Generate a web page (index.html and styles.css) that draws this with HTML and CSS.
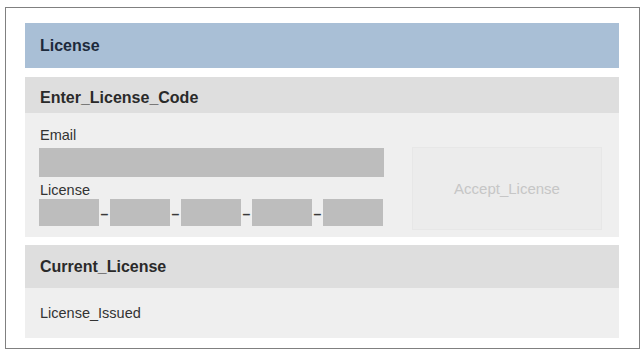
FILE: index.html
```html
<!DOCTYPE html>
<html lang="en">
<head>
  <meta charset="UTF-8">
  <meta name="viewport" content="width=device-width, initial-scale=1.0">
  <title>License</title>
  <link rel="stylesheet" href="styles.css">
</head>
<body>
  <div class="frame">
    <div class="title-bar">License</div>

    <div class="section">
      <div class="section-head">Enter_License_Code</div>
      <div class="section-body enter">
        <div class="fields">
          <div class="label">Email</div>
          <div class="input email"></div>
          <div class="label license">License</div>
          <div class="key-row">
            <span class="input seg"></span><span class="dash">&ndash;</span>
            <span class="input seg"></span><span class="dash">&ndash;</span>
            <span class="input seg"></span><span class="dash">&ndash;</span>
            <span class="input seg"></span><span class="dash">&ndash;</span>
            <span class="input seg"></span>
          </div>
        </div>
        <button class="accept">Accept_License</button>
      </div>
    </div>

    <div class="section current">
      <div class="section-head tall">Current_License</div>
      <div class="section-body issued">License_Issued</div>
    </div>
  </div>
</body>
</html>
```

FILE: styles.css
```css
* {
  margin: 0;
  padding: 0;
  box-sizing: border-box;
}

body {
  font-family: "Liberation Sans", Arial, sans-serif;
  background-color: #ffffff;
  color: #333333;
}

.frame {
  width: 635px;
  height: 342px;
  margin: 7px 0 0 5px;
  padding: 15px 20px 0 19px;
  border: 1px solid #808080;
  background-color: #ffffff;
}

.title-bar {
  height: 45px;
  display: flex;
  align-items: center;
  padding-left: 15px;
  background-color: #a9bfd6;
  color: #1d2a3c;
  font-size: 16px;
  font-weight: bold;
}

.section {
  margin-top: 9px;
}

.section.current {
  margin-top: 8px;
}

.section-head {
  height: 36px;
  padding: 13px 15px 0;
  line-height: 16px;
  background-color: #dedede;
  color: #2a2a2a;
  font-size: 16px;
  font-weight: bold;
}

.section-head.tall {
  height: 43px;
  padding-top: 14px;
}

.section-body {
  background-color: #efefef;
}

.enter {
  display: flex;
  align-items: flex-start;
  height: 124px;
  padding: 14px 17px 0 14px;
}

.fields {
  width: 345px;
}

.label {
  height: 16px;
  line-height: 16px;
  font-size: 14.5px;
  color: #333333;
  padding-left: 1px;
}

.label.license {
  margin-top: 5px;
}

.input {
  display: block;
  background-color: #bdbdbd;
}

.input.email {
  height: 29px;
  margin-top: 5px;
}

.key-row {
  display: flex;
  align-items: center;
  margin-top: 1px;
}

.input.seg {
  width: 60px;
  height: 27px;
}

.dash {
  width: 11px;
  text-align: center;
  font-size: 14px;
  font-weight: bold;
  color: #3a3a3a;
  padding-top: 2px;
}

.accept {
  margin-left: auto;
  margin-top: 20px;
  width: 190px;
  height: 83px;
  border: 1px solid #e7e7e7;
  background-color: #ececec;
  color: #c6c6c6;
  font-family: "Liberation Sans", Arial, sans-serif;
  font-size: 15px;
}

.issued {
  height: 50px;
  padding: 17px 15px 0;
  line-height: 16px;
  font-size: 14.5px;
  color: #333333;
}
```
